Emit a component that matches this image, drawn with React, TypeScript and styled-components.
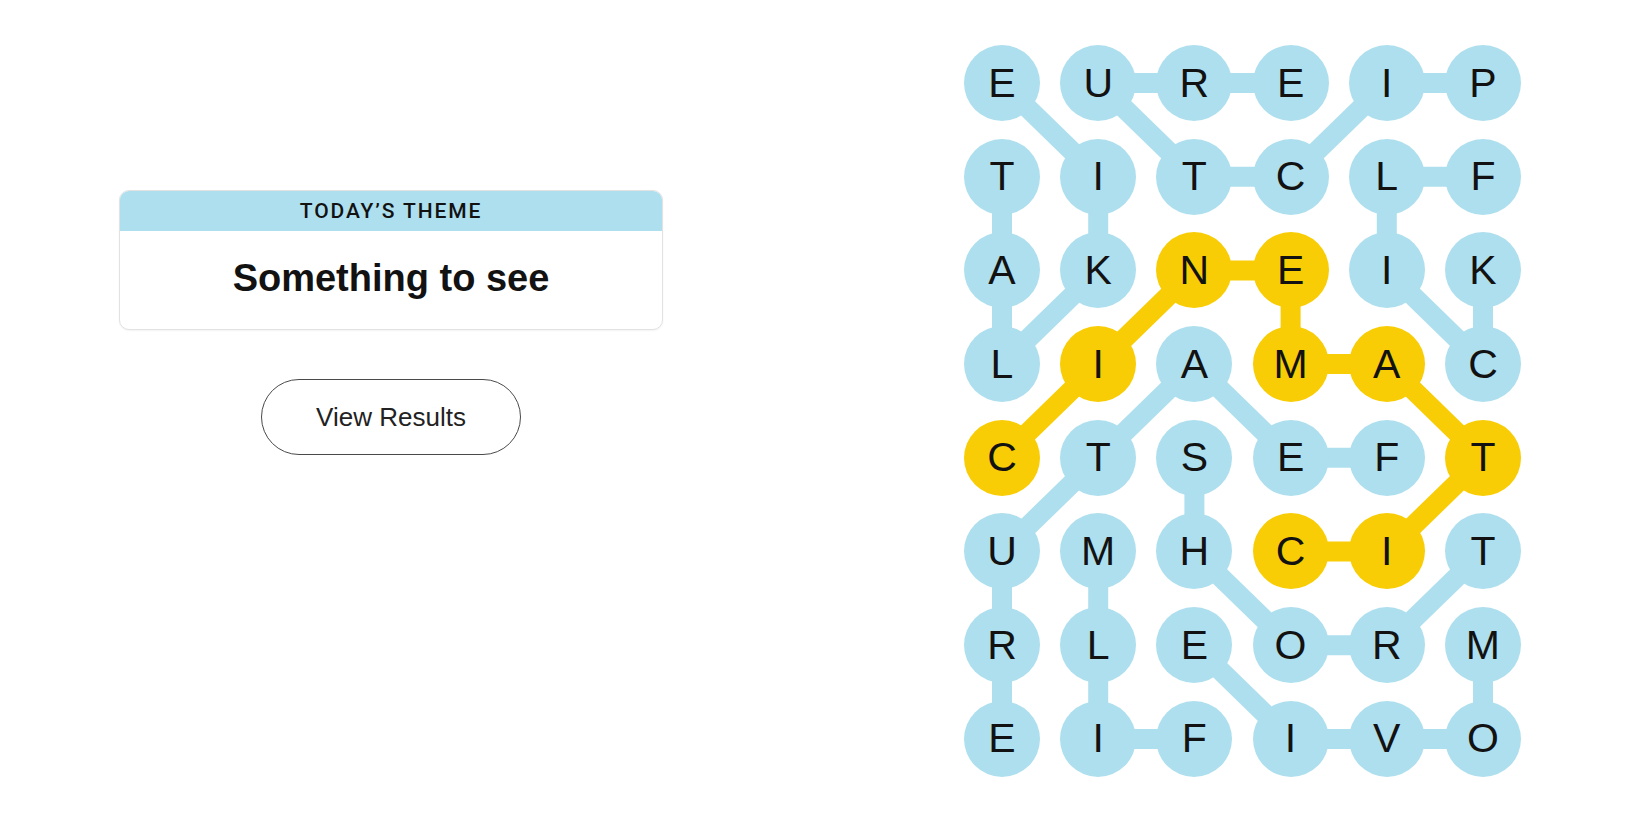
import React from "react";
import styled, { createGlobalStyle } from "styled-components";

const GlobalStyle = createGlobalStyle`
  html, body { margin: 0; padding: 0; background: #ffffff; }
  body { font-family: "Liberation Sans", Arial, sans-serif; color: #121212; }
`;

const BLUE = "#aedfee";
const YELLOW = "#f8cd05";

const CELL = 76;
const COL_STEP = 96.2;
const ROW_STEP = 93.7;

const GRID = [
  "EUREIP",
  "TITCLF",
  "AKNEIK",
  "LIAMAC",
  "CTSEFT",
  "UMHCIT",
  "RLEORM",
  "EIFIVO",
];

type Pos = [number, number];

const WORDS: { path: Pos[]; spangram?: boolean }[] = [
  { path: [[0, 5], [0, 4], [1, 3], [1, 2], [0, 1], [0, 2], [0, 3]] },
  { path: [[1, 0], [2, 0], [3, 0], [2, 1], [1, 1], [0, 0]] },
  { path: [[1, 5], [1, 4], [2, 4], [3, 5], [2, 5]] },
  { path: [[4, 4], [4, 3], [3, 2], [4, 1], [5, 0], [6, 0], [7, 0]] },
  { path: [[4, 2], [5, 2], [6, 3], [6, 4], [5, 5]] },
  { path: [[7, 2], [7, 1], [6, 1], [5, 1]] },
  { path: [[6, 5], [7, 5], [7, 4], [7, 3], [6, 2]] },
  {
    path: [[4, 0], [3, 1], [2, 2], [2, 3], [3, 3], [3, 4], [4, 5], [5, 4], [5, 3]],
    spangram: true,
  },
];

const spangramCells = new Set(
  WORDS.filter((w) => w.spangram).flatMap((w) => w.path.map(([r, c]) => `${r}-${c}`))
);

const Page = styled.main`
  display: flex;
  align-items: flex-start;
  width: 1650px;
  height: 825px;
  box-sizing: border-box;
  padding-left: 119px;
  overflow: hidden;
`;

const LeftPanel = styled.section`
  width: 544px;
  margin-top: 190px;
  display: flex;
  flex-direction: column;
  align-items: center;
`;

const ThemeCard = styled.div`
  width: 100%;
  box-sizing: border-box;
  border: 1px solid #e2e2e2;
  border-radius: 10px;
  overflow: hidden;
  box-shadow: 0 1px 2px rgba(0, 0, 0, 0.05);
  background: #fff;
`;

const ThemeHeader = styled.div`
  height: 40px;
  background: ${BLUE};
  display: flex;
  align-items: center;
  justify-content: center;
  font-family: Roboto, "Liberation Sans", Arial, sans-serif;
  font-size: 21px;
  font-weight: 500;
  letter-spacing: 1.9px;
  color: #121212;
  text-transform: uppercase;
`;

const ThemeBody = styled.div`
  height: 98px;
  display: flex;
  align-items: center;
  justify-content: center;
  font-family: "Liberation Sans", Arial, sans-serif;
  font-size: 38px;
  font-weight: 700;
  color: #121212;
  padding-bottom: 4px;
  box-sizing: border-box;
`;

const ResultsButton = styled.button`
  margin-top: 49px;
  width: 260px;
  height: 76px;
  border: 1px solid #4a4a4a;
  border-radius: 38px;
  background: #fff;
  font-family: "Liberation Sans", Arial, sans-serif;
  font-size: 26px;
  color: #222;
  cursor: pointer;
`;

const Board = styled.section`
  position: relative;
  margin-left: 301px;
  margin-top: 45px;
`;

const Connectors = styled.svg`
  position: absolute;
  left: 0;
  top: 0;
  width: 100%;
  height: 100%;
  overflow: visible;
  pointer-events: none;
`;

const LetterGrid = styled.div`
  position: relative;
  display: grid;
  grid-template-columns: repeat(6, ${CELL}px);
  grid-auto-rows: ${CELL}px;
  column-gap: ${COL_STEP - CELL}px;
  row-gap: ${ROW_STEP - CELL}px;
`;

const Letter = styled.div<{ $spangram: boolean }>`
  width: ${CELL}px;
  height: ${CELL}px;
  border-radius: 50%;
  background: ${(p) => (p.$spangram ? YELLOW : BLUE)};
  display: flex;
  align-items: center;
  justify-content: center;
  font-family: "Liberation Sans", Arial, sans-serif;
  font-size: 41px;
  font-weight: 400;
  color: #121212;
  user-select: none;
`;

const cx = (c: number) => CELL / 2 + c * COL_STEP;
const cy = (r: number) => CELL / 2 + r * ROW_STEP;

export default function App() {
  return (
    <>
      <GlobalStyle />
      <Page>
        <LeftPanel>
          <ThemeCard>
            <ThemeHeader>Today’s Theme</ThemeHeader>
            <ThemeBody>Something to see</ThemeBody>
          </ThemeCard>
          <ResultsButton>View Results</ResultsButton>
        </LeftPanel>
        <Board>
          <Connectors>
            {WORDS.map((w, wi) =>
              w.path.slice(1).map(([r, c], i) => {
                const [pr, pc] = w.path[i];
                return (
                  <line
                    key={`${wi}-${i}`}
                    x1={cx(pc)}
                    y1={cy(pr)}
                    x2={cx(c)}
                    y2={cy(r)}
                    stroke={w.spangram ? YELLOW : BLUE}
                    strokeWidth={20}
                  />
                );
              })
            )}
          </Connectors>
          <LetterGrid>
            {GRID.flatMap((row, r) =>
              row.split("").map((ch, c) => (
                <Letter key={`${r}-${c}`} $spangram={spangramCells.has(`${r}-${c}`)}>
                  {ch}
                </Letter>
              ))
            )}
          </LetterGrid>
        </Board>
      </Page>
    </>
  );
}
